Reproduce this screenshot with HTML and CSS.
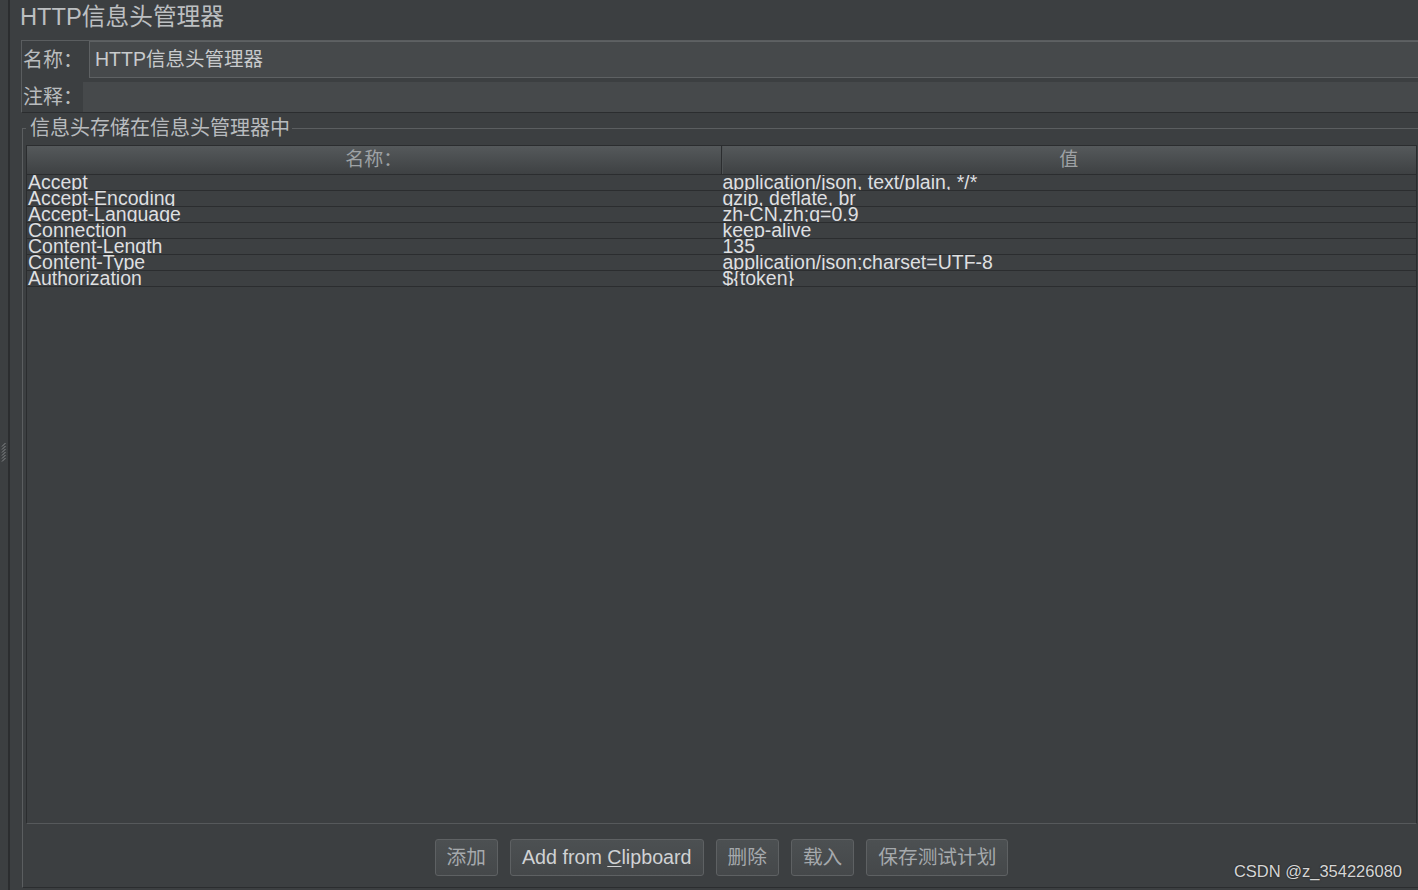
FILE: index.html
```html
<!DOCTYPE html>
<html lang="zh-CN">
<head>
<meta charset="utf-8">
<title>HTTP信息头管理器</title>
<link rel="stylesheet" href="styles.css">
</head>
<body>
<div class="app">
  <aside class="gutter">
    <svg class="grip" width="6" height="20" viewBox="0 0 6 20" aria-hidden="true">
      <path d="M1 4.5 L4.5 1 M1 7.5 L4.5 4 M1 10.5 L4.5 7 M1 13.5 L4.5 10 M1 16.5 L4.5 13 M1 19.5 L4.5 16" stroke="#85888a" stroke-width="1" fill="none"/>
    </svg>
  </aside>
  <div class="divider"></div>
  <main class="main">
    <h1 class="title">HTTP信息头管理器</h1>
    <section class="props">
      <div class="prop-row name-row">
        <label class="prop-label">名称：</label>
        <div class="field name-field">HTTP信息头管理器</div>
      </div>
      <div class="prop-row comment-row">
        <label class="prop-label">注释：</label>
        <div class="field comment-field"></div>
      </div>
    </section>
    <fieldset class="group">
      <legend class="group-title">信息头存储在信息头管理器中</legend>
      <div class="table">
        <div class="thead">
          <div class="th th-name">名称：</div>
          <div class="th">值</div>
        </div>
        <div class="tbody">
          <div class="tr"><div class="td">Accept</div><div class="td">application/json, text/plain, */*</div></div>
          <div class="tr"><div class="td">Accept-Encoding</div><div class="td">gzip, deflate, br</div></div>
          <div class="tr"><div class="td">Accept-Language</div><div class="td">zh-CN,zh;q=0.9</div></div>
          <div class="tr"><div class="td">Connection</div><div class="td">keep-alive</div></div>
          <div class="tr"><div class="td">Content-Length</div><div class="td">135</div></div>
          <div class="tr"><div class="td">Content-Type</div><div class="td">application/json;charset=UTF-8</div></div>
          <div class="tr"><div class="td">Authorization</div><div class="td">${token}</div></div>
        </div>
      </div>
      <div class="buttons">
        <button type="button" class="btn">添加</button>
        <button type="button" class="btn btn-latin">Add from <u>C</u>lipboard</button>
        <button type="button" class="btn">删除</button>
        <button type="button" class="btn">载入</button>
        <button type="button" class="btn">保存测试计划</button>
      </div>
    </fieldset>
  </main>
</div>
<div class="watermark">CSDN @z_354226080</div>
</body>
</html>
```
FILE: styles.css
```css
* { box-sizing: border-box; }
html, body { margin: 0; height: 100%; }
body {
  background: #3c3f41;
  font-family: "Liberation Sans", "Noto Sans CJK SC", sans-serif;
  color: #bbbbbb;
  overflow: hidden;
}
.app { display: flex; height: 890px; }
.gutter {
  width: 8px;
  flex: none;
  display: flex;
  align-items: center;
}
.grip { display: block; margin-left: 1px; margin-top: 14px; }
.divider { width: 2px; flex: none; background: #2b2d2f; }
.main {
  flex: 1;
  min-width: 0;
  display: flex;
  flex-direction: column;
}
.title {
  margin: 0;
  height: 40px;
  flex: none;
  padding-left: 10px;
  font-size: 23.7px;
  font-weight: normal;
  line-height: 34px;
  color: #bcbfc1;
  white-space: nowrap;
}
.props {
  flex: none;
  margin-left: 11px;
  border-top: 1px solid #5a5d5f;
  border-left: 1px solid #5a5d5f;
  border-bottom: 1px solid #2b2d2f;
}
.prop-row { display: flex; align-items: stretch; }
.name-row { height: 37px; }
.comment-row { height: 30px; margin-top: 4px; }
.prop-label {
  display: flex;
  align-items: center;
  padding-left: 1px;
  font-size: 20px;
  line-height: 24px;
  color: #b9bcbe;
  white-space: nowrap;
}
.field { flex: 1; min-width: 0; background: #46494b; }
.name-field {
  margin-left: 6px;
  border: 1px solid #5e6163;
  border-right: none;
  padding-left: 5px;
  font-size: 19.5px;
  line-height: 35px;
  color: #c9cbcd;
  white-space: nowrap;
}
.group {
  flex: 1;
  min-height: 0;
  min-width: 0;
  margin: 4px -2px 2px 12px;
  padding: 6px 2px 0 3px;
  border: 1px solid #5b5e60;
  border-bottom-color: #2b2d2f;
  display: flex;
  flex-direction: column;
}
.group-title {
  padding: 0 2px 0 4px;
  font-size: 20px;
  line-height: 22px;
  color: #b8bbbe;
  white-space: nowrap;
}
.table {
  flex: 1;
  min-height: 0;
  display: flex;
  flex-direction: column;
  border: 1px solid #2b2d2f;
  border-bottom-color: #56595b;
  overflow: hidden;
}
.thead {
  flex: none;
  display: grid;
  grid-template-columns: 1fr 1fr;
  height: 29px;
  border-bottom: 1px solid #2b2d2f;
  background: linear-gradient(#55595b, #3e4143);
}
.th {
  text-align: center;
  font-size: 19px;
  line-height: 28px;
  color: #9ea2a5;
  white-space: nowrap;
}
.th-name { border-right: 1px solid #2b2d2f; box-shadow: 1px 0 0 #4e5254; }
.tr {
  display: grid;
  grid-template-columns: 1fr 1fr;
  height: 16px;
  border-bottom: 1px solid #2b2d2f;
  background: #3d4042;
}
.td {
  height: 15px;
  overflow: hidden;
  padding-left: 1px;
  font-size: 19.5px;
  line-height: 15px;
  color: #dedfe0;
  white-space: nowrap;
}
.buttons {
  flex: none;
  height: 63px;
  padding-top: 15px;
  display: flex;
  justify-content: center;
  align-items: flex-start;
  gap: 12px;
}
.btn {
  height: 37px;
  margin: 0;
  padding: 0 11px;
  border: 1px solid #5e6163;
  border-radius: 3px;
  background: linear-gradient(#4c5052, #45484a);
  font-family: "Liberation Sans", "Noto Sans CJK SC", sans-serif;
  font-size: 19.7px;
  line-height: 35px;
  color: #a5a9ac;
  white-space: nowrap;
  cursor: default;
}
.btn-latin { color: #d0d2d4; }
.btn-latin u { text-underline-offset: 2px; }
.watermark {
  position: absolute;
  right: 16px;
  top: 861px;
  font-family: "Liberation Sans", sans-serif;
  font-size: 16.5px;
  line-height: 20px;
  color: #d6d6d6;
  text-shadow: 0 0 2px rgba(0, 0, 0, 0.6);
  white-space: nowrap;
}
```
